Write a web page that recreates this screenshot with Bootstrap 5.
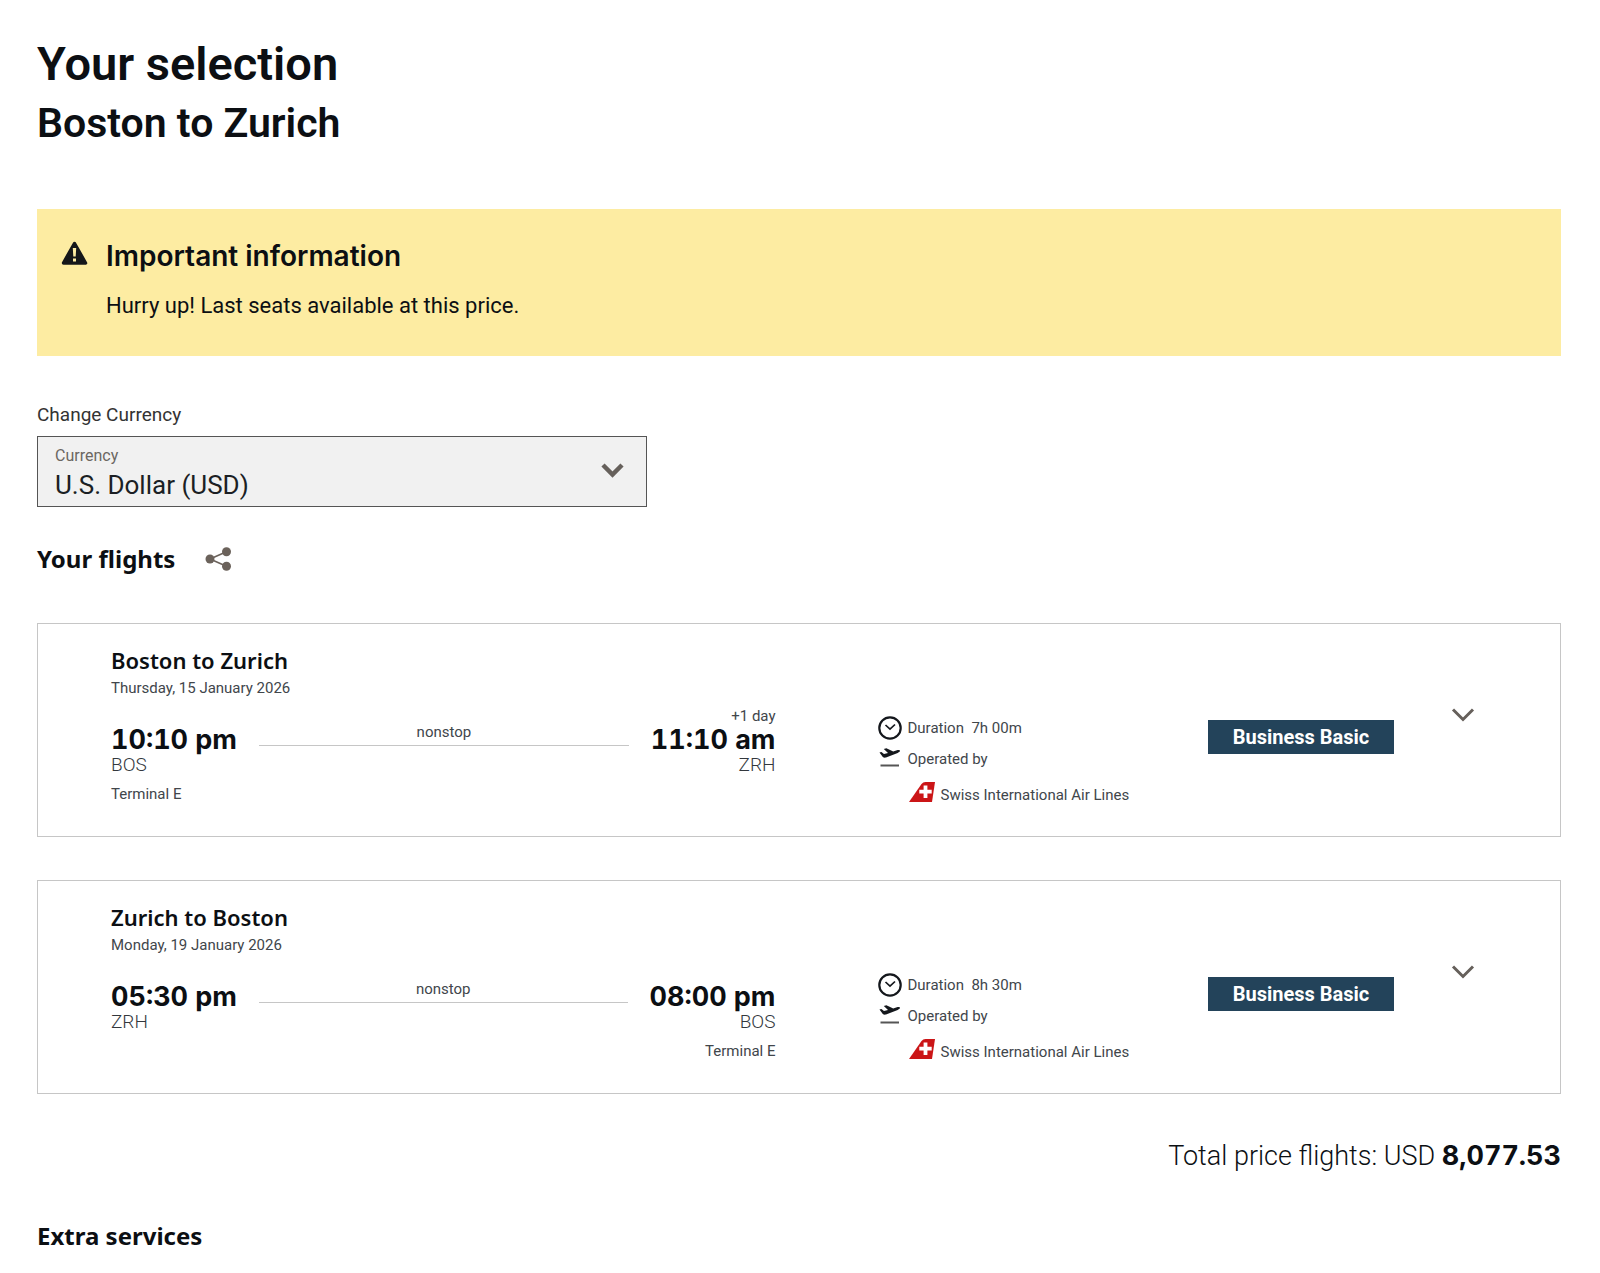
<!DOCTYPE html>
<html lang="en">
<head>
<meta charset="utf-8">
<meta name="viewport" content="width=device-width, initial-scale=1">
<title>Your selection</title>
<link href="https://cdn.jsdelivr.net/npm/bootstrap@5.3.0/dist/css/bootstrap.min.css" rel="stylesheet">
<style>
  body { font-family: Roboto, "Liberation Sans", sans-serif; color: #0c0f13; background: #fff; }
  .page { padding: 36px 39px 16px 37px; }
  h1, h2, h3, p { margin: 0; }
  h1 { font-size: 47px; line-height: 56px; font-weight: 600; }
  .route-head { font-size: 41px; line-height: 48px; font-weight: 600; margin-top: 7px; }
  .notice { background: #fdeca2; margin-top: 62px; padding: 30px 24px 36px; gap: 18px; }
  .notice svg { margin-top: 2px; }
  .notice h2 { font-size: 28px; line-height: 34px; font-weight: 600; font-family: Inter, sans-serif; }
  .notice p { font-size: 22px; line-height: 28px; margin-top: 19px; }
  .caption-line { font-size: 19px; line-height: 24px; margin-top: 47px; color: #333; }
  .currency-box { width: 40%; min-width: 320px; margin-top: 9px; }
  .currency-box > .form-select { height: 71px; padding: 31px 60px 4px 17px; font-size: 26px; line-height: 34px; border: 1px solid #555; border-radius: 0; background-color: #f1f1f1; color: #1b1f24; background-image: none; }
  .currency-box > label { font-size: 16px; line-height: 20px; padding: 9px 17px; color: #6b6762; }
  .currency-box > .form-select ~ label, .currency-box > .form-select:focus ~ label { transform: none; opacity: 1; }
  .currency-box > svg { position: absolute; right: 23px; top: 27px; pointer-events: none; }
  .section-head { font-size: 24px; line-height: 30px; font-weight: 700; font-family: "Noto Sans", sans-serif; }
  .share-btn { border: 0; background: none; padding: 0; line-height: 0; margin-left: 30px; }
  .flights-bar { margin-top: 37px; }
  .flight { border: 1px solid #c6c6c6; margin-top: 43px; padding-left: 73px; min-height: 214px; }
  .flights-bar + .flight { margin-top: 49px; }
  .leg { padding: 21px 60px 30px 0; }
  .leg h3 { font-size: 22px; line-height: 30px; font-weight: 600; font-family: "Noto Sans", sans-serif; }
  .fine { font-size: 15px; line-height: 20px; color: #41464b; }
  .leg-date { margin-top: 3px; }
  .leg-times { margin-top: 8px; gap: 22px; }
  .clock-time { font-size: 27px; line-height: 28px; font-weight: 700; font-family: Inter, sans-serif; font-variant-numeric: tabular-nums; }
  .code { font-size: 19px; line-height: 22px; color: #33383d; font-weight: 300; }
  .terminal { margin-top: 8px; }
  .track { padding-top: 16px; }
  .track div { border-bottom: 1px solid #c6c6c6; padding-bottom: 3px; }
  .info { padding: 91px 0 20px 42px; }
  .info .fine { gap: 6px; height: 26px; }
  .info .fine + .fine { margin-top: 5px; }
  .info .airline { padding-left: 31px; margin-top: 7px !important; }
  .icon-slot { width: 24px; flex: none; }
  .fare { padding-left: 10px; }
  .fare-tag { background: #23435a; color: #fff; font-size: 20px; line-height: 34px; font-weight: 700; padding: 0 25px; margin-top: 96px; border-radius: 0; }
  .expand-btn { border: 0; background: none; padding: 0; line-height: 0; margin: 83px 0 0 57px; }
  .total { font-size: 27px; line-height: 36px; font-weight: 300; margin-top: 44px; }
  .total strong { font-family: Inter, sans-serif; font-weight: 700; font-size: 27px; font-variant-numeric: tabular-nums; }
  .extras { margin-top: 47px; }
</style>
</head>
<body>
<svg class="d-none" aria-hidden="true">
  <symbol id="ic-clock" viewBox="0 0 24 24"><circle cx="12" cy="12" r="10.7" fill="none" stroke="#14171c" stroke-width="2.2"/><path d="M7.500 9l4.500 4.200 5-4.700" fill="none" stroke="#14171c" stroke-width="1.700"/></symbol>
  <symbol id="ic-plane" viewBox="0 0 24 24"><path d="M1.500 5.500l1.900-.5 2.600 1.900 4-1-4.200-4 2.600-.6 6.800 3.300 3.700-1.300c1.500-.5 2.800-.4 3.100.3.300.8-.9 1.800-2.300 2.300L8 10.600c-1.500.4-2.600 0-3.400-.9z" fill="#14171c"/><path d="M2.500 18.500h18.500" stroke="#555" stroke-width="2"/></symbol>
  <symbol id="ic-tail" viewBox="0 0 26 20"><path d="M0 20L12.500 2Q14 0 16.500 0H26L23 20z" fill="#cb1517"/><path d="M14.600 3.500h3.800v4.300h4.300v3.800h-4.300v4.300h-3.800v-4.300h-4.300V7.800h4.300z" fill="#fff"/></symbol>
  <symbol id="ic-down" viewBox="0 0 24 16"><path d="M2 2.500l10 10 10-10" fill="none" stroke="#66605b" stroke-width="3"/></symbol>
</svg>
<main class="page">
  <h1>Your selection</h1>
  <h2 class="route-head">Boston to Zurich</h2>

  <section class="notice d-flex align-items-start" role="alert">
    <svg class="flex-shrink-0" width="27" height="24" viewBox="0 0 27 24" aria-hidden="true"><path d="M13.500 2.500L24.500 22H2.500z" fill="#15171a" stroke="#15171a" stroke-width="3.500" stroke-linejoin="round"/><path d="M11.800 7h3.400l-.5 8.500h-2.400zM12 17.500h3v3h-3z" fill="#fdeca2"/></svg>
    <div>
      <h2>Important information</h2>
      <p>Hurry up! Last seats available at this price.</p>
    </div>
  </section>

  <p class="caption-line">Change Currency</p>
  <div class="currency-box form-floating">
    <select class="form-select" id="currency"><option>U.S. Dollar (USD)</option><option>Euro (EUR)</option><option>Swiss Franc (CHF)</option></select>
    <label for="currency">Currency</label>
    <svg width="23" height="15" viewBox="0 0 23 15" aria-hidden="true"><path d="M2 2l9.500 9.500L21 2" fill="none" stroke="#66605b" stroke-width="4.500"/></svg>
  </div>

  <div class="flights-bar d-flex align-items-center">
    <h2 class="section-head">Your flights</h2>
    <button class="share-btn" type="button" aria-label="Share"><svg width="27" height="24" viewBox="0 0 27 24"><path d="M22 4.500L5 12l17 7.500" fill="none" stroke="#6b625b" stroke-width="1.600"/><g fill="#6b625b"><circle cx="5" cy="12" r="4.500"/><circle cx="21.500" cy="4.700" r="4.500"/><circle cx="21.500" cy="19.300" r="4.500"/></g></svg></button>
  </div>

  <article class="flight row g-0">
    <div class="leg col-6">
      <h3>Boston to Zurich</h3>
      <p class="fine leg-date">Thursday, 15 January 2026</p>
      <div class="leg-times d-flex">
        <div>
          <p class="fine">&nbsp;</p>
          <p class="clock-time">10:10 pm</p>
          <p class="code">BOS</p>
          <p class="fine terminal">Terminal E</p>
        </div>
        <div class="track flex-grow-1 text-center"><div class="fine">nonstop</div></div>
        <div class="text-end">
          <p class="fine">+1 day</p>
          <p class="clock-time">11:10 am</p>
          <p class="code">ZRH</p>
        </div>
      </div>
    </div>
    <div class="info col-3">
      <div class="fine d-flex align-items-center"><svg class="icon-slot" height="24"><use href="#ic-clock"/></svg><span>Duration&nbsp; 7h 00m</span></div>
      <div class="fine d-flex align-items-center"><svg class="icon-slot" height="24"><use href="#ic-plane"/></svg><span>Operated by</span></div>
      <div class="fine airline d-flex align-items-end"><svg width="26" height="20" class="flex-shrink-0 align-self-center"><use href="#ic-tail"/></svg><span>Swiss International Air Lines</span></div>
    </div>
    <div class="fare col-3 d-flex align-items-start">
      <span class="fare-tag">Business Basic</span>
      <button class="expand-btn" type="button" aria-label="Show flight details"><svg width="24" height="16"><use href="#ic-down"/></svg></button>
    </div>
  </article>

  <article class="flight row g-0">
    <div class="leg col-6">
      <h3>Zurich to Boston</h3>
      <p class="fine leg-date">Monday, 19 January 2026</p>
      <div class="leg-times d-flex">
        <div>
          <p class="fine">&nbsp;</p>
          <p class="clock-time">05:30 pm</p>
          <p class="code">ZRH</p>
        </div>
        <div class="track flex-grow-1 text-center"><div class="fine">nonstop</div></div>
        <div class="text-end">
          <p class="fine">&nbsp;</p>
          <p class="clock-time">08:00 pm</p>
          <p class="code">BOS</p>
          <p class="fine terminal">Terminal E</p>
        </div>
      </div>
    </div>
    <div class="info col-3">
      <div class="fine d-flex align-items-center"><svg class="icon-slot" height="24"><use href="#ic-clock"/></svg><span>Duration&nbsp; 8h 30m</span></div>
      <div class="fine d-flex align-items-center"><svg class="icon-slot" height="24"><use href="#ic-plane"/></svg><span>Operated by</span></div>
      <div class="fine airline d-flex align-items-end"><svg width="26" height="20" class="flex-shrink-0 align-self-center"><use href="#ic-tail"/></svg><span>Swiss International Air Lines</span></div>
    </div>
    <div class="fare col-3 d-flex align-items-start">
      <span class="fare-tag">Business Basic</span>
      <button class="expand-btn" type="button" aria-label="Show flight details"><svg width="24" height="16"><use href="#ic-down"/></svg></button>
    </div>
  </article>

  <p class="total text-end">Total price flights: USD <strong>8,077.53</strong></p>
  <h2 class="section-head extras">Extra services</h2>
</main>
<script src="https://cdn.jsdelivr.net/npm/bootstrap@5.3.0/dist/js/bootstrap.bundle.min.js"></script>
</body>
</html>
